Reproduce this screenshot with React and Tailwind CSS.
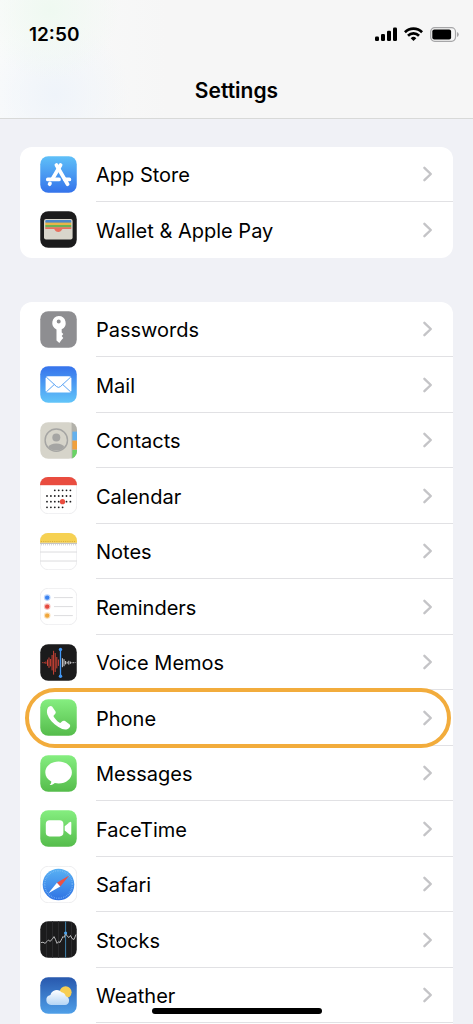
import React from "react";

const Tile = ({ fill, outline, children }) => (
  <>
    <rect
      x="0.25"
      y="0.25"
      width="36.5"
      height="36.5"
      rx="8"
      fill={fill}
      stroke={outline ? "#e9e9eb" : "none"}
      strokeWidth="0.8"
    />
    {children}
  </>
);

const Gradient = ({ id, from, to }) => (
  <linearGradient id={id} x1="0" y1="0" x2="0" y2="1">
    <stop offset="0" stopColor={from} />
    <stop offset="1" stopColor={to} />
  </linearGradient>
);

const AppStoreIcon = () => (
  <Tile fill="url(#sky)">
    <g stroke="#fff" strokeWidth="3.7" strokeLinecap="round">
      <path d="M20.6 9 12.4 23M10 27.4 9.6 28.2" />
      <path d="M16.4 9 27.6 28.2" />
      <path d="M7.8 23.4H19M25 23.4H29.4" />
    </g>
  </Tile>
);

const WalletIcon = () => (
  <Tile fill="#1b1b1c">
    <rect x="4" y="8" width="28.6" height="20.6" rx="2" fill="#d8d5cb" />
    <rect x="5.3" y="9" width="26" height="3" rx="1" fill="#4c87c9" />
    <rect x="5.3" y="11.6" width="26" height="2.6" fill="#e9b548" />
    <rect x="5.3" y="14" width="26" height="2.5" fill="#6cb256" />
    <path
      d="M5.3 16.3H31.3V18H22.6C21.6 18 21.8 21 18.3 21S15 18 14 18H5.3z"
      fill="#e8705f"
    />
  </Tile>
);

const PasswordsIcon = () => (
  <Tile fill="#8e8e91">
    <path
      fill="#fff"
      fillRule="evenodd"
      d="M18.7 5a7 7 0 0 1 3 13.3v3.2l1.6 1.6-1.6 2 1.6 2-1.8 2-2.2 3-2.8-2.6V18.4A7 7 0 0 1 18.7 5zm0 3.6a2 2 0 1 0 0 4 2 2 0 0 0 0-4z"
    />
  </Tile>
);

const MailIcon = () => (
  <Tile fill="url(#mail)">
    <rect x="5.6" y="10.2" width="25.8" height="16.4" rx="2.2" fill="#fff" />
    <g fill="none" stroke="#5ba4f5" strokeWidth="1">
      <path d="m6.2 11 10.4 9.6q1.9 1.6 3.8 0L30.8 11" />
      <path d="m6.2 26 8.2-7.6M30.8 26l-8.2-7.6" />
    </g>
  </Tile>
);

const ContactsIcon = () => (
  <Tile fill="#d6d4ca">
    <g clipPath="url(#tile)">
      <rect x="31.6" width="6" height="37" fill="#b2b1aa" />
      <rect x="32.4" y="9.6" width="5" height="8.6" fill="#64b1ee" />
      <rect x="32.4" y="18.8" width="5" height="8.6" fill="#f0a03c" />
      <rect x="32.4" y="28" width="5" height="9" fill="#69d465" />
    </g>
    <circle cx="16.3" cy="18.2" r="11.2" fill="none" stroke="#a5a5a3" strokeWidth="1.4" />
    <circle cx="16.3" cy="15.5" r="4" fill="#a5a5a3" />
    <path d="M8.2 25q2-3.6 8.1-3.6T24.4 25q-3 3.6-8.1 3.6T8.2 25z" fill="#a5a5a3" />
  </Tile>
);

const calendarRows = [
  { y: 13.3, from: 2, to: 6 },
  { y: 19, from: 0, to: 6 },
  { y: 24.7, from: 0, to: 6 },
  { y: 30.3, from: 0, to: 4 },
];

const CalendarIcon = () => (
  <Tile fill="#fff" outline>
    <rect width="37" height="8.2" fill="#e94c3f" clipPath="url(#tile)" />
    {calendarRows.map((row) =>
      [0, 1, 2, 3, 4, 5, 6]
        .filter((col) => col >= row.from && col <= row.to)
        .map((col) => (
          <circle key={`${row.y}-${col}`} cx={7 + col * 3.9} cy={row.y} r="0.9" fill="#1c1c1e" />
        ))
    )}
    <circle cx="22.5" cy="24.7" r="2.6" fill="#e94c3f" />
  </Tile>
);

const NotesIcon = () => (
  <Tile fill="#fff" outline>
    <rect width="37" height="9.8" fill="#f6d152" clipPath="url(#tile)" />
    <path d="M1 8.6H36" stroke="#d5ad3a" strokeDasharray="1 1.2" />
    <path d="M0 10.4H37" stroke="#bdbdbf" />
    <path d="M1 11.8H36" stroke="#a9a9ab" strokeWidth="0.8" strokeDasharray="0.8 1.2" />
    <path d="M0 19H37M0 28H37" stroke="#dcdcde" />
  </Tile>
);

const RemindersIcon = () => (
  <Tile fill="#fff" outline>
    {[
      [9.6, "#3a82f0"],
      [18.6, "#e5493d"],
      [27.6, "#f0a63a"],
    ].map(([y, color]) => (
      <g key={y}>
        <circle cx="7.2" cy={y} r="3.3" fill={color} opacity="0.35" />
        <circle cx="7.2" cy={y} r="2.2" fill={color} />
        <path d={`M14 ${y}H32.8`} stroke="#dcdcde" />
      </g>
    ))}
  </Tile>
);

const VoiceMemosIcon = () => (
  <Tile fill="#1b1b1c">
    <g fill="none" strokeWidth="1">
      <path
        stroke="#cc4336"
        d="M2.6 18.3v.8M4.2 18v1.4M5.9 17.5v2.4M7.5 15.5v6.4M9 13.5v10.4M10.6 15v7.4M12.1 11v15.4M13.6 6.8v23.8M15.2 9v19M16.8 13v11.4M18.4 15.5v6.4"
      />
      <path
        stroke="#d0d0d2"
        d="M22.4 14.2v9M24 15.2v7M25.6 17v3.4M27.2 17.8v1.8M28.8 16.8v3.8M30.4 17.6v2.2M32 18.2v1M33.6 18.2v1M35.2 18.4v.6"
      />
    </g>
    <path d="M20.5 5.2v27" stroke="#4298f7" strokeWidth="1.3" />
    <circle cx="20.5" cy="5.4" r="1.7" fill="#4298f7" />
    <circle cx="20.5" cy="32.2" r="1.7" fill="#4298f7" />
  </Tile>
);

const PhoneIcon = () => (
  <Tile fill="url(#green)">
    <path
      fill="#fff"
      d="M8 8.6c1-1.6 3-2.4 4.1-1l3.1 4.4c.8 1.200.7 2.200-.1 3l-1.200 1.300c-.5.600-.4 1.100 0 1.700 1.400 2.200 3.200 4.100 5.400 5.600.600.400 1.100.500 1.600 0l1.300-1.300c.8-.8 1.800-.9 2.900-.2l4.300 3.100c1.300 1 .9 2.700-.6 4-2.200 1.900-5.500 1.900-10.400-1.200C13 24.500 9 20 7.400 15.400 6.500 12.800 7 10.300 8 8.600z"
    />
  </Tile>
);

const MessagesIcon = () => (
  <Tile fill="url(#green)">
    <path
      fill="#fff"
      d="M18.6 6.4c7.5 0 13.3 4.9 13.3 11s-5.8 11-13.3 11c-1.3 0-2.6-.2-3.8-.5-1.2 1.2-3 2.2-5.2 2.2 1.2-1.2 1.7-2.3 1.7-3.7-3.7-2-6-5.2-6-9 0-6.1 5.8-11 13.3-11z"
    />
  </Tile>
);

const FaceTimeIcon = () => (
  <Tile fill="url(#green)">
    <rect x="5.8" y="10.2" width="17.6" height="16.2" rx="3.8" fill="#fff" />
    <path
      d="M24.7 16.2 29.6 12.2q1.7-1.1 1.7.8v10.6q0 1.9-1.7.8L24.7 20.4z"
      fill="#fff"
    />
  </Tile>
);

const SafariIcon = () => (
  <Tile fill="#fff" outline>
    <circle cx="18.5" cy="18.5" r="15.8" fill="url(#compass)" />
    <circle
      cx="18.5"
      cy="18.5"
      r="13.8"
      fill="none"
      stroke="#8cc4f8"
      strokeWidth="1.4"
      strokeDasharray="0.5 1.3"
    />
    <path d="M29.2 9.6 16.9 16.7 20.3 20.5z" fill="#ec5145" />
    <path d="M8.4 27.2 16.9 16.7 20.3 20.5z" fill="#fff" />
  </Tile>
);

const StocksIcon = () => (
  <Tile fill="#1b1b1c">
    <path d="M6.5 1v35M12.5 0v37M18.5 0v37M31.5 1v35" stroke="#303032" strokeWidth="0.8" />
    <path d="M25.6 0.5v36" stroke="#3f83ad" strokeWidth="1" />
    <polyline
      points="1,21.6 3,21.2 5,22.4 7,20.5 8.5,19 10,20.4 12,18.5 14,15.6 15.5,18.5 17,22.4 18.5,20.8 20,21.4 22,17.5 23,15.5 24,16.5 25.6,12.5 27.5,15.5 29,16.5 30.5,14.5 32,17.5 34,18.5 36,13.5"
      fill="none"
      stroke="#c9c9cb"
      strokeWidth="0.9"
    />
    <circle cx="25.6" cy="12" r="1.6" fill="#4ea5ee" />
  </Tile>
);

const WeatherIcon = () => (
  <Tile fill="url(#dusk)">
    <circle cx="25.6" cy="15.2" r="6" fill="#f7ce52" />
    <path
      d="M11 28a5 5 0 0 1-.6-9.9A6.500 6.500 0 0 1 21.500 15.200a5.500 5.500 0 0 1 4.300 4 4.500 4.500 0 0 1-.8 8.800z"
      fill="url(#cloud)"
    />
  </Tile>
);

const storeItems = [
  { name: "App Store", icon: AppStoreIcon },
  { name: "Wallet & Apple Pay", icon: WalletIcon },
];

const appItems = [
  { name: "Passwords", icon: PasswordsIcon },
  { name: "Mail", icon: MailIcon },
  { name: "Contacts", icon: ContactsIcon },
  { name: "Calendar", icon: CalendarIcon },
  { name: "Notes", icon: NotesIcon },
  { name: "Reminders", icon: RemindersIcon },
  { name: "Voice Memos", icon: VoiceMemosIcon },
  { name: "Phone", icon: PhoneIcon, highlighted: true },
  { name: "Messages", icon: MessagesIcon },
  { name: "FaceTime", icon: FaceTimeIcon },
  { name: "Safari", icon: SafariIcon },
  { name: "Stocks", icon: StocksIcon },
  { name: "Weather", icon: WeatherIcon },
];

const SettingsRow = ({ item, divider }) => {
  const Icon = item.icon;
  return (
    <li className="relative odd:h-[55px] even:h-14">
      <a href="#" className="flex h-full items-center pl-5">
        <svg viewBox="0 0 37 37" className="mb-px h-[37px] w-[37px] shrink-0" aria-hidden="true">
          <Icon />
        </svg>
        <span
          className={`ml-[19px] flex h-full flex-1 items-center justify-between pr-5 ${
            divider ? "border-b border-[#e1e1e4]" : ""
          }`}
        >
          <span className="pt-0.5 text-xl">{item.name}</span>
          <svg
            viewBox="0 0 11 16"
            className="h-4 w-[11px]"
            fill="none"
            stroke="#c4c4c7"
            strokeWidth="2.4"
            strokeLinecap="round"
            strokeLinejoin="round"
            aria-hidden="true"
          >
            <path d="M2.4 1.8 8.8 8 2.4 14.2" />
          </svg>
        </span>
      </a>
      {item.highlighted && (
        <div className="pointer-events-none absolute -top-0.5 -bottom-0.5 right-0.5 left-[5px] z-10 rounded-full border-4 border-[#f2ac3c]" />
      )}
    </li>
  );
};

const IconDefs = () => (
  <svg className="absolute h-0 w-0" aria-hidden="true">
    <defs>
      <Gradient id="sky" from="#5fc0f8" to="#3473eb" />
      <Gradient id="mail" from="#3673ec" to="#62c5f9" />
      <Gradient id="green" from="#85ee80" to="#55bc4b" />
      <Gradient id="compass" from="#58b1f3" to="#2f72e4" />
      <Gradient id="dusk" from="#2858ad" to="#4f9fe8" />
      <Gradient id="cloud" from="#ffffff" to="#b5d5f5" />
      <clipPath id="tile">
        <rect width="37" height="37" rx="8" />
      </clipPath>
    </defs>
  </svg>
);

const StatusBar = () => (
  <div className="flex h-[68px] items-center justify-between pr-[14px] pl-[29px]">
    <span className="pt-0.5 text-[19px] font-semibold">12:50</span>
    <div className="flex items-center gap-[7px]">
      <svg viewBox="0 0 22 14" className="h-[14px] w-[22px]" aria-hidden="true">
        <rect x="0" y="9.5" width="4" height="4.5" rx="1.2" />
        <rect x="6" y="7" width="4" height="7" rx="1.2" />
        <rect x="12" y="3.8" width="4" height="10.2" rx="1.2" />
        <rect x="18" y="0.5" width="4" height="13.5" rx="1.2" />
      </svg>
      <svg
        viewBox="0 0 19 14"
        className="h-[14px] w-[19px]"
        fill="none"
        stroke="#000"
        strokeWidth="2.7"
        aria-hidden="true"
      >
        <path d="M0.9 5.2a12.3 12.3 0 0 1 17.2 0" />
        <path d="M4 8.700a7.900 7.900 0 0 1 11 0" />
        <path d="M6.700 11.200a4 4 0 0 1 5.600 0L9.500 14z" fill="#000" stroke="none" />
      </svg>
      <svg viewBox="0 0 29 15" className="h-[15px] w-[29px]" aria-hidden="true">
        <rect x="0.7" y="0.7" width="24.8" height="13.6" rx="4" fill="none" stroke="#a6a6a8" strokeWidth="1.2" />
        <rect x="2.3" y="2.5" width="18.8" height="10" rx="2" />
        <path d="M27 5q1.800.8 1.800 2.500T27 10z" fill="#a6a6a8" />
      </svg>
    </div>
  </div>
);

const App = () => {
  return (
    <div className="relative flex h-screen flex-col overflow-hidden bg-[#f0f1f6] font-['Inter','Liberation_Sans',sans-serif] text-black">
      <IconDefs />
      <header className="h-[119px] shrink-0 border-b border-[#d8d9d8] bg-[#f6f6f6] bg-[radial-gradient(circle_at_50px_10px,#eff9f1,transparent_70px),radial-gradient(circle_at_55px_95px,#eff4fa,transparent_75px),linear-gradient(to_right,#fafbfb,#f6f6f6_35%)]">
        <StatusBar />
        <h1 className="pt-[9px] text-center text-[21px] leading-7 font-semibold">Settings</h1>
      </header>
      <main className="flex flex-1 flex-col gap-[44px] px-5 pt-7">
        <ul className="shrink-0 rounded-xl bg-white">
          {storeItems.map((item, i) => (
            <SettingsRow key={item.name} item={item} divider={i < storeItems.length - 1} />
          ))}
        </ul>
        <ul className="grow rounded-t-xl bg-white">
          {appItems.map((item) => (
            <SettingsRow key={item.name} item={item} divider />
          ))}
        </ul>
      </main>
      <div className="absolute bottom-2.5 left-1/2 h-1.5 w-[170px] -translate-x-1/2 rounded-full bg-black" />
    </div>
  );
};

export default App;
